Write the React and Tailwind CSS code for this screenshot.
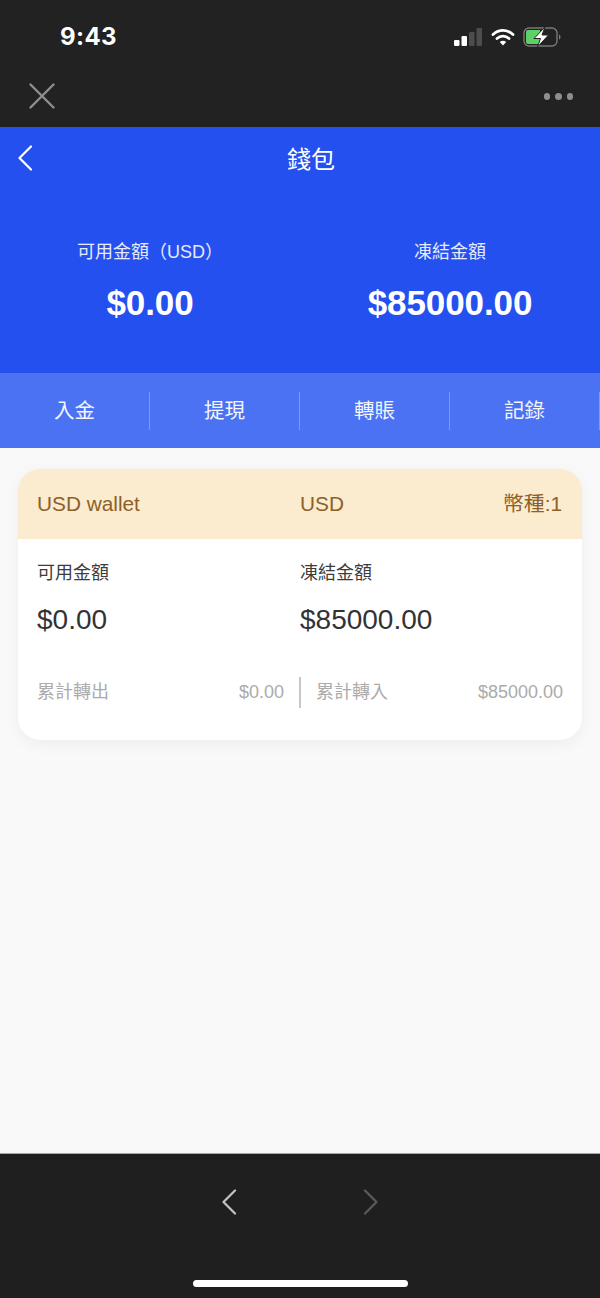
const font = { fontFamily: '"Liberation Sans", "Noto Sans CJK TC", sans-serif' };

function Chevron({ dir = "left", className = "" }) {
  return (
    <svg width="16" height="26" viewBox="0 0 16 26" fill="none" className={className}>
      <path d={dir === "left" ? "M14 1.5 L2.5 13 L14 24.5" : "M2 1.5 L13.5 13 L2 24.5"} stroke="currentColor" strokeWidth="2.2" strokeLinecap="round" strokeLinejoin="round" />
    </svg>
  );
}

function StatusIcons() {
  return (
    <div className="flex items-center">
      <svg width="28" height="20" viewBox="0 0 28 20" className="mr-[9px]">
        <rect x="0" y="13" width="5.5" height="6" rx="1.2" fill="#fff" />
        <rect x="7.5" y="9" width="5.5" height="10" rx="1.2" fill="#fff" />
        <rect x="15" y="5" width="5.5" height="14" rx="1.2" fill="#4d4d4d" />
        <rect x="22.5" y="1" width="5.5" height="18" rx="1.2" fill="#4d4d4d" />
      </svg>
      <svg width="24" height="20" viewBox="0 0 24 20" fill="none" className="mr-[8px]">
        <path d="M2 7.5 C8 2 16 2 22 7.5" stroke="#fff" strokeWidth="2.8" strokeLinecap="round" />
        <path d="M6 11.5 C9.5 8.4 14.5 8.4 18 11.5" stroke="#fff" strokeWidth="2.8" strokeLinecap="round" />
        <path d="M12 18.5 L8.8 15 C10.6 13.4 13.4 13.4 15.2 15 Z" fill="#fff" />
      </svg>
      <svg width="39" height="20" viewBox="0 0 39 20" fill="none">
        <rect x="1" y="1" width="33" height="18" rx="5" stroke="#7a7a7a" strokeWidth="1.4" />
        <path d="M3 5 a2 2 0 0 1 2 -2 H17 V17 H5 a2 2 0 0 1 -2 -2 Z" fill="#5fd068" />
        <path d="M36 7.5 C38 8 38 12 36 12.5 Z" fill="#7a7a7a" />
        <path d="M22 0 L11 11.5 H17.5 L14.5 20 L25.5 8 H19 Z" fill="#fff" stroke="#222222" strokeWidth="1" />
      </svg>
    </div>
  );
}

function Summary({ label, value }) {
  return (
    <div className="flex-1 flex flex-col items-center">
      <div className="mt-[1px] text-[18px] leading-[24px] text-[#e6ebfd]">{label}</div>
      <div className="mt-[19px] text-[35px] leading-[40px] font-bold tracking-[-0.1px] text-white">{value}</div>
    </div>
  );
}

function Tab({ label }) {
  return (
    <div className="w-[150px] h-[38px] flex items-center justify-center pt-[1px] border-r border-[#7d98f5] text-[20.5px] text-[#f4f6fe]">
      {label}
    </div>
  );
}

function Stat({ label, value }) {
  return (
    <div className="flex-1">
      <div className="text-[18px] leading-[24px] text-[#3c3c3c]">{label}</div>
      <div className="mt-[19px] text-[28px] leading-[32px] text-[#333333]">{value}</div>
    </div>
  );
}

function Total({ label, value }) {
  return (
    <div className="flex-1 flex items-center justify-between text-[18px] text-[#ababab]">
      <span>{label}</span>
      <span>{value}</span>
    </div>
  );
}

export default function App() {
  return (
    <div style={font} className="w-[600px] h-[1298px] flex flex-col overflow-hidden bg-[#f9f9f9]">
      <div className="h-[127px] bg-[#222222] shrink-0">
        <div className="h-[70px] flex items-center justify-between pl-[60px] pr-[38px] pt-[3px]">
          <span className="text-[24px] font-bold text-white tracking-[0.4px]" style={{ fontFamily: '"Inter", "Liberation Sans", sans-serif' }}>9:43</span>
          <StatusIcons />
        </div>
        <div className="h-[57px] flex items-start justify-between pl-[29px] pr-[27px] pt-[13px]">
          <svg width="26" height="26" viewBox="0 0 26 26" fill="none">
            <path d="M1.5 1.5 L24.5 24.5 M24.5 1.5 L1.5 24.5" stroke="#8e8e8e" strokeWidth="2.4" strokeLinecap="round" />
          </svg>
          <div className="flex gap-[5px] mt-[10px]">
            <span className="w-[6.5px] h-[6.5px] rounded-full bg-[#8e8e8e]" />
            <span className="w-[6.5px] h-[6.5px] rounded-full bg-[#8e8e8e]" />
            <span className="w-[6.5px] h-[6.5px] rounded-full bg-[#8e8e8e]" />
          </div>
        </div>
      </div>

      <div className="h-[246px] bg-[#2550f0] shrink-0 flex flex-col">
        <div className="relative h-[62px] flex items-center justify-center pl-[22px] pt-[3px] text-[24px] text-white">
          <Chevron className="absolute left-[17px] top-[18px] text-white" />
          錢包
        </div>
        <div className="flex mt-[50px]">
          <Summary label="可用金額（USD）" value="$0.00" />
          <Summary label="凍結金額" value="$85000.00" />
        </div>
      </div>

      <div className="h-[75px] bg-[#4a72f2] shrink-0 flex items-center">
        <Tab label="入金" />
        <Tab label="提現" />
        <Tab label="轉賬" />
        <Tab label="記錄" />
      </div>

      <div className="flex-1 px-[18px] pt-[21px]">
        <div className="h-[271px] rounded-[22px] bg-white overflow-hidden shadow-[0_4px_16px_rgba(0,0,0,0.05)]">
          <div className="h-[70px] bg-[#fbebcf] flex items-center pl-[19px] pr-[20px] text-[20.8px] text-[#8c6028]">
            <span className="w-[263px]">USD wallet</span>
            <span className="flex-1">USD</span>
            <span>幣種:1</span>
          </div>
          <div className="px-[19px] pt-[22px]">
            <div className="flex">
              <Stat label="可用金額" value="$0.00" />
              <Stat label="凍結金額" value="$85000.00" />
            </div>
            <div className="flex items-center mt-[41px]">
              <Total label="累計轉出" value="$0.00" />
              <div className="w-[2px] h-[31px] bg-[#c8c8c8] mx-[15px]" />
              <Total label="累計轉入" value="$85000.00" />
            </div>
          </div>
        </div>
      </div>

      <div className="h-[145px] bg-[#1f1f1f] border-t border-[#a8a8a8] shrink-0 flex flex-col items-center">
        <div className="flex mt-[35px] gap-[126px]">
          <Chevron className="text-[#c4c4c4]" />
          <Chevron dir="right" className="text-[#5a5a5a]" />
        </div>
        <div className="mt-[65px] w-[215px] h-[7px] rounded-full bg-white" />
      </div>
    </div>
  );
}
